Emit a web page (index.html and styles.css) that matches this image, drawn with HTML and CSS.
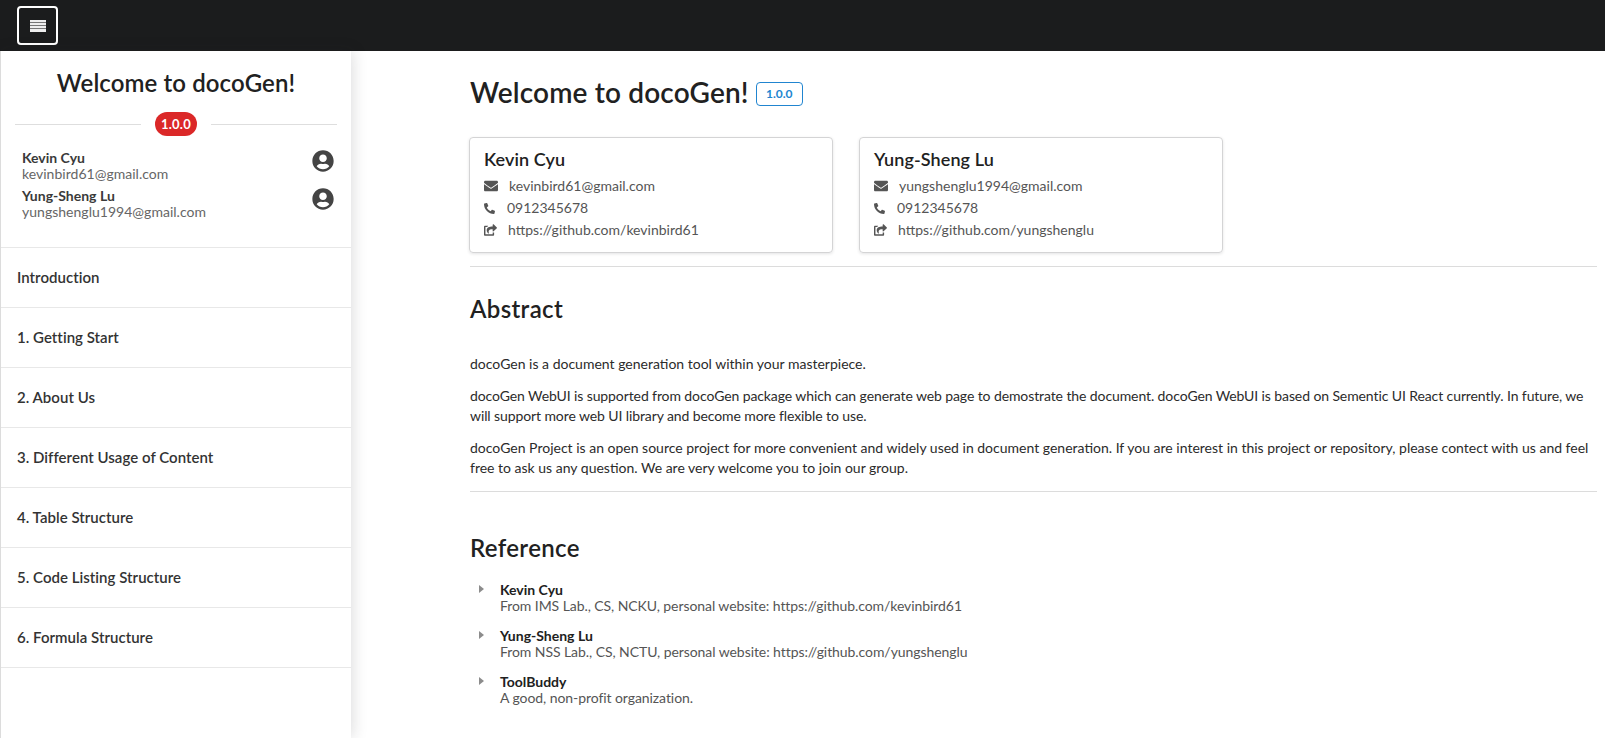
FILE: index.html
```html
<!DOCTYPE html>
<html lang="en">
<head>
<meta charset="utf-8">
<title>docoGen</title>
<link rel="stylesheet" href="styles.css">
</head>
<body>
<svg class="sprite" aria-hidden="true">
  <symbol id="i-user" viewBox="0 0 496 512"><path d="M248 8C111 8 0 119 0 256s111 248 248 248 248-111 248-248S385 8 248 8zm0 96c48.600 0 88 39.400 88 88s-39.400 88-88 88-88-39.400-88-88 39.400-88 88-88zm0 344c-58.700 0-111.300-26.600-146.500-68.200 18.800-35.400 55.600-59.800 98.500-59.800 2.400 0 4.800.4 7.100 1.100 13 4.200 26.600 6.900 40.900 6.900 14.300 0 28-2.700 40.900-6.900 2.300-.7 4.700-1.100 7.100-1.100 42.900 0 79.700 24.400 98.500 59.800C359.300 421.400 306.700 448 248 448z"/></symbol>
  <symbol id="i-mail" viewBox="0 0 512 512"><path d="M502.300 190.800c3.900-3.100 9.700-.2 9.700 4.700V400c0 26.500-21.500 48-48 48H48c-26.500 0-48-21.500-48-48V195.600c0-5 5.700-7.800 9.700-4.700 22.400 17.400 52.100 39.500 154.100 113.600 21.100 15.400 56.700 47.800 92.200 47.600 35.700.3 72-32.800 92.300-47.600 102-74.100 131.600-96.300 154-113.700zM256 320c23.200.4 56.600-29.200 73.400-41.400 132.700-96.300 142.800-104.700 173.400-128.700 5.800-4.500 9.200-11.500 9.200-18.900v-19c0-26.500-21.500-48-48-48H48C21.500 64 0 85.500 0 112v19c0 7.400 3.400 14.300 9.200 18.900 30.600 23.900 40.700 32.400 173.400 128.700 16.800 12.200 50.200 41.800 73.400 41.400z"/></symbol>
  <symbol id="i-phone" viewBox="0 0 512 512"><path transform="translate(512 0) scale(-1 1)" d="M493.400 24.600l-104-24c-11.300-2.600-22.900 3.300-27.500 13.900l-48 112c-4.200 9.800-1.400 21.300 6.900 28l60.600 49.600c-36 76.700-98.900 140.500-177.200 177.200l-49.600-60.600c-6.800-8.300-18.200-11.100-28-6.900l-112 48C3.900 366.500-2 378.100.6 389.400l24 104C27.100 504.200 36.700 512 48 512c256.100 0 464-207.500 464-464 0-11.200-7.700-20.900-18.600-23.400z"/></symbol>
  <symbol id="i-share" viewBox="0 0 576 512"><path d="M568.482 177.448L424.479 313.433C409.300 327.768 384 317.140 384 295.985v-71.963c-144.575.970-205.566 35.113-164.775 171.353 4.483 14.973-12.846 26.567-25.006 17.330C155.252 383.105 120 326.488 120 269.339c0-143.937 117.599-172.500 264-173.312V24.012c0-21.174 25.317-31.768 40.479-17.448l144.003 135.990c10.016 9.461 10.023 25.425 0 34.894zM384 379.128V448H64V128h50.916a11.990 11.990 0 0 0 8.648-3.693c14.953-15.568 32.237-27.890 51.014-37.676C185.708 80.823 181.584 64 169.033 64H48C21.490 64 0 85.490 0 112v352c0 26.510 21.490 48 48 48h352c26.510 0 48-21.490 48-48v-88.806c0-8.288-8.197-14.066-16.011-11.302a71.830 71.830 0 0 1-34.189 3.377c-7.270-1.046-13.800 4.514-13.800 11.859z"/></symbol>
</svg>
<header class="topbar">
  <button class="menu-btn" aria-label="Menu">
    <span class="stripes"><i></i><i></i><i></i><i></i></span>
  </button>
</header>
<div class="layout">
  <aside class="sidebar">
    <h2 class="side-title">Welcome to docoGen!</h2>
    <div class="version-divider"><span class="rule"></span><span class="red-label">1.0.0</span><span class="rule"></span></div>
    <div class="people">
      <div class="person">
        <div><div class="person-name">Kevin Cyu</div><div class="person-mail">kevinbird61@gmail.com</div></div>
        <svg class="avatar"><use href="#i-user"/></svg>
      </div>
      <div class="person">
        <div><div class="person-name">Yung-Sheng Lu</div><div class="person-mail">yungshenglu1994@gmail.com</div></div>
        <svg class="avatar"><use href="#i-user"/></svg>
      </div>
    </div>
    <nav class="side-nav">
      <a>Introduction</a>
      <a>1. Getting Start</a>
      <a>2. About Us</a>
      <a>3. Different Usage of Content</a>
      <a>4. Table Structure</a>
      <a>5. Code Listing Structure</a>
      <a>6. Formula Structure</a>
    </nav>
  </aside>
  <main class="content">
    <div class="page-head">
      <h1>Welcome to docoGen!</h1>
      <span class="blue-label">1.0.0</span>
    </div>
    <div class="cards">
      <section class="card">
        <h3>Kevin Cyu</h3>
        <div class="line"><svg class="ic mail"><use href="#i-mail"/></svg><span>kevinbird61@gmail.com</span></div>
        <div class="line"><svg class="ic phone"><use href="#i-phone"/></svg><span>0912345678</span></div>
        <div class="line"><svg class="ic share"><use href="#i-share"/></svg><span>https://github.com/kevinbird61</span></div>
      </section>
      <section class="card">
        <h3>Yung-Sheng Lu</h3>
        <div class="line"><svg class="ic mail"><use href="#i-mail"/></svg><span>yungshenglu1994@gmail.com</span></div>
        <div class="line"><svg class="ic phone"><use href="#i-phone"/></svg><span>0912345678</span></div>
        <div class="line"><svg class="ic share"><use href="#i-share"/></svg><span>https://github.com/yungshenglu</span></div>
      </section>
    </div>
    <hr>
    <h2 class="section-title abstract">Abstract</h2>
    <p class="first">docoGen is a document generation tool within your masterpiece.</p>
    <p class="tight">docoGen WebUI is supported from docoGen package which can generate web page to demostrate the document. docoGen WebUI is based on Sementic UI React currently. In future, we will support more web UI library and become more flexible to use.</p>
    <p>docoGen Project is an open source project for more convenient and widely used in document generation. If you are interest in this project or repository, please contect with us and feel free to ask us any question. We are very welcome you to join our group.</p>
    <hr class="hr2">
    <h2 class="section-title reference">Reference</h2>
    <ul class="refs">
      <li><b>Kevin Cyu</b><span>From IMS Lab., CS, NCKU, personal website: https://github.com/kevinbird61</span></li>
      <li><b>Yung-Sheng Lu</b><span>From NSS Lab., CS, NCTU, personal website: https://github.com/yungshenglu</span></li>
      <li><b>ToolBuddy</b><span>A good, non-profit organization.</span></li>
    </ul>
  </main>
</div>
</body>
</html>
```
FILE: styles.css
```css
* { box-sizing: border-box; }
html, body { margin: 0; height: 100%; }
body {
  font-family: Lato, "Liberation Sans", sans-serif;
  font-size: 14px;
  line-height: 20px;
  color: #212121;
  background: #fff;
  overflow: hidden;
  display: flex;
  flex-direction: column;
}
.sprite { display: none; }
.topbar {
  height: 51px;
  flex: none;
  background: #1b1c1d;
  padding: 6px 17px;
}
.menu-btn {
  display: flex;
  align-items: center;
  justify-content: center;
  width: 41px;
  height: 39px;
  padding: 0;
  background: transparent;
  border: 2px solid #fff;
  border-radius: 4px;
}
.stripes { display: flex; flex-direction: column; gap: 1px; width: 16px; background: #777; }
.stripes i { display: block; height: 2.250px; background: #eee; }
.layout { flex: 1; display: flex; min-height: 0; }
.sidebar {
  width: 351px;
  flex: none;
  border-left: 1px solid #dcdcdc;
  background: #fff;
  box-shadow: 2px 0 14px rgba(34, 36, 38, .15);
}
.side-title {
  margin: 0;
  padding-top: 15px;
  font-size: 24px;
  letter-spacing: .1px;
  line-height: 34px;
  font-weight: 600;
  text-align: center;
  color: #212121;
}
.version-divider {
  display: flex;
  align-items: center;
  margin: 12px 14px 0;
  gap: 14px;
}
.rule { flex: 1; height: 1px; background: #dedede; }
.red-label {
  background: #db2828;
  color: #fff;
  font-weight: 700;
  font-size: 13px;
  letter-spacing: .2px;
  line-height: 12px;
  width: 42px;
  text-align: center;
  padding: 6px 0;
  border-radius: 12px;
}
.people { padding: 12px 17px 0 21px; height: 111px; }
.person { display: flex; justify-content: space-between; align-items: flex-start; height: 38px; }
.person-name { font-weight: 700; font-size: 14px; line-height: 16px; color: #3a3a3a; margin-top: 2px; }
.person-mail { font-size: 14px; letter-spacing: .02px; line-height: 16px; color: #666; }
.avatar { width: 22px; height: 22px; margin-top: 2px; fill: #444; }
.side-nav { display: flex; flex-direction: column; border-top: 1px solid #e8e8e8; }
.side-nav a {
  height: 60px;
  display: flex;
  align-items: center;
  padding: 0 0 2px 16px;
  font-size: 15px;
  letter-spacing: .03px;
  font-weight: 600;
  color: #333;
  border-bottom: 1px solid #e8e8e8;
}
.content {
  flex: 1;
  min-width: 0;
  padding: 0 8px 0 119px;
}
.page-head { display: flex; gap: 7px; padding-top: 21px; height: 86px; align-items: flex-start; }
h1 { margin: 0; font-size: 28px; letter-spacing: .15px; line-height: 40px; font-weight: 600; color: #212121; }
.blue-label {
  margin-top: 10px;
  border: 1px solid #2185d0;
  border-radius: 4px;
  color: #2185d0;
  font-size: 12px;
  font-weight: 700;
  line-height: 22px;
  height: 24px;
  width: 47px;
  text-align: center;
}
.cards { display: flex; gap: 26px; margin-left: -1px; }
.card {
  width: 364px;
  height: 116px;
  padding: 9px 14px;
  border: 1px solid #d4d4d5;
  border-radius: 4px;
  box-shadow: 0 1px 3px rgba(34, 36, 38, .12);
}
.card h3 { margin: 0 0 4px; font-size: 18px; letter-spacing: .1px; line-height: 24px; font-weight: 600; }
.line { display: flex; align-items: center; height: 22px; color: #555; font-size: 14px; }
.ic { flex: none; fill: #555; }
.ic.mail { width: 14px; height: 14px; margin-right: 11px; }
.ic.phone { width: 11px; height: 11px; margin-right: 12px; }
.ic.share { width: 13px; height: 12px; margin-right: 11px; }
hr { margin: 13px 0 0; border: 0; border-top: 1px solid #dcdcdc; }
.section-title { margin: 0; font-size: 24px; letter-spacing: .35px; line-height: 34px; font-weight: 600; color: #212121; }
.abstract { margin-top: 25px; }
p { margin: 0 0 12px; color: #2b2b2b; }
p.first { margin-top: 28px; }
p.tight { letter-spacing: -.1px; }
.hr2 { margin-top: 13px; }
.reference { margin-top: 39px; }
.refs { list-style: none; margin: 17px 0 0; padding: 0 0 0 30px; }
.refs li { position: relative; margin-bottom: 14px; line-height: 16px; }
.refs li::before {
  content: "";
  position: absolute;
  left: -21px;
  top: 3px;
  border-left: 5px solid #8c8c8c;
  border-top: 4.500px solid transparent;
  border-bottom: 4.500px solid transparent;
}
.refs b { display: block; font-weight: 700; color: #212121; }
.refs span { display: block; color: #555; letter-spacing: -.07px; }
```
